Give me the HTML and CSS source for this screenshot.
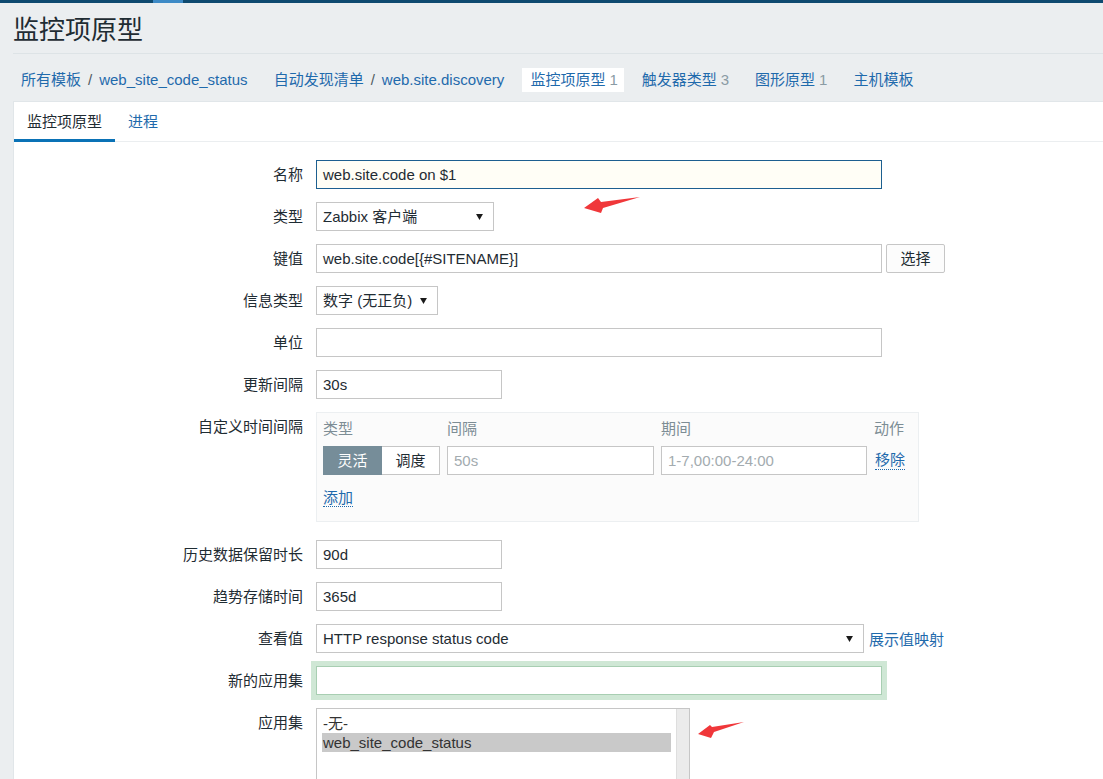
FILE: index.html
```html
<!DOCTYPE html>
<html lang="zh-CN">
<head>
<meta charset="utf-8">
<title>监控项原型</title>
<link rel="stylesheet" href="styles.css">
</head>
<body>
<div class="topbar"><span class="topbar-accent"></span></div>
<header class="page-header"><h1 class="page-title">监控项原型</h1></header>
<nav class="crumbs">
  <div class="crumb"><a class="link">所有模板</a><span class="crumb-sep">/</span><a class="link">web_site_code_status</a></div>
  <div class="crumb"><a class="link">自动发现清单</a><span class="crumb-sep">/</span><a class="link">web.site.discovery</a></div>
  <div class="crumb crumb-selected"><span class="link">监控项原型</span><span class="crumb-count">1</span></div>
  <div class="crumb"><a class="link">触发器类型</a><span class="crumb-count">3</span></div>
  <div class="crumb"><a class="link">图形原型</a><span class="crumb-count">1</span></div>
  <div class="crumb"><a class="link">主机模板</a></div>
</nav>
<main class="panel">
  <div class="tabs">
    <div class="tab tab-active">监控项原型</div>
    <div class="tab"><a class="link">进程</a></div>
  </div>
  <div class="form">
    <div class="row">
      <div class="row-label">名称</div>
      <div class="row-field"><div class="input w-wide input-focus">web.site.code on $1</div></div>
    </div>
    <div class="row">
      <div class="row-label">类型</div>
      <div class="row-field"><div class="input select w-type"><span>Zabbix 客户端</span><svg class="caret" viewBox="0 0 8 7"><path d="M0 0H8L4 7Z"/></svg></div></div>
    </div>
    <div class="row">
      <div class="row-label">键值</div>
      <div class="row-field"><div class="input w-wide">web.site.code[{#SITENAME}]</div><div class="btn">选择</div></div>
    </div>
    <div class="row">
      <div class="row-label">信息类型</div>
      <div class="row-field"><div class="input select w-info"><span>数字 (无正负)</span><svg class="caret" viewBox="0 0 8 7"><path d="M0 0H8L4 7Z"/></svg></div></div>
    </div>
    <div class="row">
      <div class="row-label">单位</div>
      <div class="row-field"><div class="input w-wide"></div></div>
    </div>
    <div class="row">
      <div class="row-label">更新间隔</div>
      <div class="row-field"><div class="input w-short">30s</div></div>
    </div>
    <div class="row row-interval">
      <div class="row-label">自定义时间间隔</div>
      <div class="row-field">
        <div class="interval-box">
          <div class="interval-grid interval-head">
            <span>类型</span><span>间隔</span><span>期间</span><span>动作</span>
          </div>
          <div class="interval-grid interval-row">
            <div class="seg">
              <span class="seg-btn seg-active">灵活</span><span class="seg-btn">调度</span>
            </div>
            <div class="input placeholder">50s</div>
            <div class="input placeholder">1-7,00:00-24:00</div>
            <span class="link link-dotted">移除</span>
          </div>
          <div class="interval-add"><span class="link link-dotted">添加</span></div>
        </div>
      </div>
    </div>
    <div class="row">
      <div class="row-label">历史数据保留时长</div>
      <div class="row-field"><div class="input w-short">90d</div></div>
    </div>
    <div class="row">
      <div class="row-label">趋势存储时间</div>
      <div class="row-field"><div class="input w-short">365d</div></div>
    </div>
    <div class="row">
      <div class="row-label">查看值</div>
      <div class="row-field"><div class="input select w-map"><span>HTTP response status code</span><svg class="caret" viewBox="0 0 8 7"><path d="M0 0H8L4 7Z"/></svg></div><a class="link map-link">展示值映射</a></div>
    </div>
    <div class="row">
      <div class="row-label">新的应用集</div>
      <div class="row-field"><div class="input w-wide input-valid"></div></div>
    </div>
    <div class="row">
      <div class="row-label">应用集</div>
      <div class="row-field">
        <div class="listbox">
          <div class="listbox-options">
            <div class="option">-无-</div>
            <div class="option option-selected">web_site_code_status</div>
          </div>
          <div class="listbox-scroll"></div>
        </div>
      </div>
    </div>
  </div>
</main>
<svg class="annot annot-1" viewBox="0 0 60 20"><polygon points="1,11 15,1 18,5 57,0 20,11 18,16"/></svg>
<svg class="annot annot-2" viewBox="0 0 50 18"><polygon points="1,12 13,3 15,5 47,0 17,10 14,16"/></svg>
</body>
</html>
```
FILE: styles.css
```css
html, body {
  margin: 0;
  padding: 0;
}
body {
  background: #ebeef0;
  font-family: "Liberation Sans", "Noto Sans CJK SC", sans-serif;
  font-size: 15px;
  color: #1f2c33;
  position: relative;
  min-height: 779px;
}
.topbar {
  height: 3px;
  background: #0e4a70;
  display: flex;
}
.topbar-accent {
  margin-left: 153px;
  width: 30px;
  background: #3d8ac6;
}
.page-header {
  margin-left: 13px;
  height: 50px;
  border-bottom: 1px solid #dde3e6;
}
.page-title {
  margin: 0;
  padding-top: 5px;
  line-height: 45px;
  font-size: 26px;
  font-weight: normal;
  color: #1f2c33;
}
.crumbs {
  display: flex;
  align-items: center;
  gap: 10px;
  height: 48px;
  padding-left: 13px;
  padding-top: 3px;
  box-sizing: border-box;
}
.crumb {
  display: flex;
  align-items: center;
  padding: 0 8px;
  height: 24px;
  line-height: 24px;
  white-space: nowrap;
}
.crumb-selected {
  background: #ffffff;
  padding-right: 6px;
}
.crumb-sep {
  margin: 0 7px;
  color: #4f5a60;
}
.crumb-count {
  margin-left: 4px;
  color: #8a9ba4;
}
.link {
  color: #1f6aac;
  text-decoration: none;
}
.link-dotted {
  border-bottom: 1px dotted #1f6aac;
  line-height: 18px;
}
.panel {
  margin-left: 14px;
  background: #ffffff;
  box-shadow: 0 0 0 1px #e1e6e9;
  padding-bottom: 30px;
}
.tabs {
  display: flex;
  border-bottom: 1px solid #ebeef0;
}
.tab {
  padding: 2px 13px 0;
  line-height: 35px;
  border-bottom: 3px solid transparent;
  margin-bottom: -1px;
}
.tab-active {
  border-bottom-color: #0a72b6;
  color: #1f2c33;
}
.form {
  padding-top: 18px;
}
.row {
  display: grid;
  grid-template-columns: 289px auto;
  column-gap: 13px;
  margin-bottom: 13px;
}
.row-interval {
  margin-bottom: 18px;
}
.row-label {
  text-align: right;
  line-height: 29px;
  white-space: nowrap;
}
.row-field {
  display: flex;
  align-items: center;
}
.input {
  height: 29px;
  box-sizing: border-box;
  border: 1px solid #c6c6c6;
  background: #ffffff;
  padding: 0 6px;
  line-height: 27px;
  white-space: nowrap;
  overflow: hidden;
  color: #1f2c33;
}
.input-focus {
  border-color: #1d5f90;
  background: #fffef6;
}
.input-valid {
  border-color: #a8ceb2;
  box-shadow: 0 0 0 5px #cfe7d5;
}
.placeholder {
  color: #a3abaf;
}
.w-wide { width: 566px; }
.w-type { width: 178px; }
.w-info { width: 122px; }
.w-short { width: 186px; }
.w-map { width: 548px; }
.select {
  display: flex;
  align-items: center;
  justify-content: space-between;
  padding-right: 10px;
}
.caret {
  width: 7px;
  height: 6px;
  fill: #1a1a1a;
  flex: none;
}
.btn {
  margin-left: 4px;
  width: 59px;
  height: 29px;
  box-sizing: border-box;
  border: 1px solid #c6c6c6;
  border-radius: 2px;
  background: #fcfcfc;
  text-align: center;
  line-height: 27px;
}
.map-link {
  margin-left: 5px;
}
.interval-box {
  width: 603px;
  box-sizing: border-box;
  border: 1px solid #eceff1;
  background: #fbfbfb;
  padding: 5px 7px 12px 6px;
}
.interval-grid {
  display: grid;
  grid-template-columns: 117px 207px 206px auto;
  column-gap: 7px;
}
.interval-head {
  line-height: 22px;
  color: #7d8d95;
}
.interval-row {
  margin-top: 6px;
  align-items: center;
}
.interval-row .link-dotted {
  justify-self: start;
  margin-left: 1px;
}
.seg {
  display: flex;
}
.seg-btn {
  width: 58px;
  height: 29px;
  box-sizing: border-box;
  border: 1px solid #c6c6c6;
  border-left: none;
  background: #ffffff;
  text-align: center;
  line-height: 27px;
}
.seg-active {
  width: 59px;
  background: #768d99;
  border: 1px solid #768d99;
  color: #ffffff;
}
.interval-add {
  margin-top: 12px;
  line-height: 22px;
}
.listbox {
  width: 374px;
  height: 160px;
  box-sizing: border-box;
  border: 1px solid #c6c6c6;
  display: flex;
}
.listbox-options {
  flex: 1;
  padding: 5px 5px 0 5px;
}
.option {
  line-height: 19px;
  padding-left: 1px;
  color: #333333;
}
.option-selected {
  background: #c9c9c9;
}
.listbox-scroll {
  width: 12px;
  background: #ebebeb;
  border-left: 1px solid #dedede;
}
.annot {
  position: absolute;
  fill: #f0373a;
}
.annot-1 {
  left: 583px;
  top: 197px;
  width: 60px;
  height: 20px;
}
.annot-2 {
  left: 697px;
  top: 722px;
  width: 50px;
  height: 18px;
}
```
